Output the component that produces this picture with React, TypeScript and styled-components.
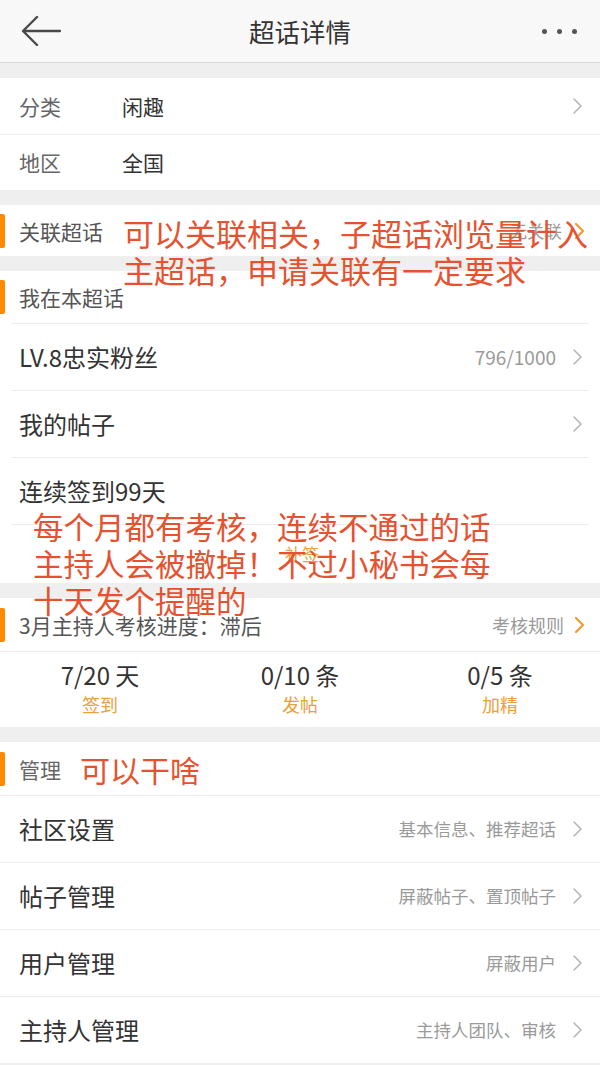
import React from "react";
import styled, { createGlobalStyle } from "styled-components";

const Global = createGlobalStyle`
  html, body { margin: 0; padding: 0; background: #efefef; }
  body { font-family: "Noto Sans CJK SC", "Noto Sans", sans-serif; }
  * { box-sizing: border-box; }
`;

const Page = styled.div`
  position: relative;
  width: 600px;
  min-height: 1065px;
  background: #efefef;
  overflow: hidden;
`;

const Header = styled.header`
  height: 63px;
  background: #f8f8f8;
  border-bottom: 1px solid #dadada;
  display: grid;
  grid-template-columns: 100px 1fr 100px;
  align-items: center;
`;

const BackBtn = styled.div`
  padding-left: 21px;
  display: flex;
  align-items: center;
`;

const Title = styled.h1`
  margin: 0;
  text-align: center;
  font-size: 25.5px;
  font-weight: 400;
  color: #333;
  line-height: 1;
`;

const More = styled.div`
  display: flex;
  justify-content: flex-end;
  gap: 10px;
  padding-right: 23px;
`;

const Dot = styled.span`
  width: 5px;
  height: 5px;
  border-radius: 50%;
  background: #555;
`;

const Section = styled.section`
  background: #fff;
  margin-top: 15px;
`;

const Row = styled.div<{ $h: number; $inset?: number; $divider?: boolean }>`
  position: relative;
  height: ${(p) => p.$h}px;
  display: flex;
  align-items: center;
  padding: 0 17px 0 19px;
  &::before {
    content: "";
    display: ${(p) => (p.$divider ? "block" : "none")};
    position: absolute;
    top: 0;
    left: ${(p) => p.$inset ?? 0}px;
    right: ${(p) => p.$inset ?? 0}px;
    height: 1px;
    background: #ececec;
  }
`;

const HeadRow = styled(Row)`
  padding-right: 15px;
  &::after {
    content: "";
    position: absolute;
    left: 0;
    top: 50%;
    width: 5px;
    height: 34px;
    transform: translateY(-50%);
    background: #ff8a00;
    border-radius: 0 2px 2px 0;
  }
`;

const Label = styled.span<{ $auto?: boolean }>`
  font-size: 21px;
  color: #666;
  width: ${(p) => (p.$auto ? "auto" : "103px")};
  flex: none;
`;

const Value = styled.span`
  font-size: 21px;
  color: #333;
  flex: 1;
`;

const HeadLabel = styled.span`
  font-size: 21px;
  color: #555;
  flex: 1;
  white-space: nowrap;
`;

const Big = styled.span`
  font-size: 24px;
  color: #333;
  flex: 1;
`;

const Hint = styled.span<{ $size?: number; $gap?: number }>`
  font-size: ${(p) => p.$size ?? 17.5}px;
  color: #9a9a9a;
  margin-right: ${(p) => p.$gap ?? 16}px;
  white-space: nowrap;
`;

const Spacer = styled.span`
  flex: 1;
`;

const Center = styled.span`
  flex: 1;
  text-align: center;
  font-size: 17px;
  color: #e9a13b;
  padding-left: 2px;
`;

const Stats = styled.div`
  position: relative;
  display: grid;
  grid-template-columns: repeat(3, 1fr);
  padding: 9px 0 11px;
  &::before {
    content: "";
    position: absolute;
    top: 0;
    left: 0;
    right: 0;
    height: 1px;
    background: #ececec;
  }
`;

const Stat = styled.div`
  display: flex;
  flex-direction: column;
  align-items: center;
  gap: 2px;
`;

const StatNum = styled.span`
  font-size: 24px;
  line-height: 30px;
  color: #333;
`;

const StatLabel = styled.span`
  font-size: 18px;
  line-height: 24px;
  color: #e9a13b;
`;

const Note = styled.span`
  font-size: 30px;
  color: #e6522f;
  margin-left: 19px;
  line-height: 1;
`;

const Overlay = styled.div<{ $top: number; $left: number; $size: number }>`
  position: absolute;
  top: ${(p) => p.$top}px;
  left: ${(p) => p.$left}px;
  font-size: ${(p) => p.$size}px;
  line-height: 37px;
  color: #e6522f;
  white-space: pre;
  pointer-events: none;
`;

const Chevron = ({ orange }: { orange?: boolean }) => (
  <svg width="11" height="18" viewBox="0 0 11 18" style={{ flex: "none" }}>
    <path
      d="M2 2 L9 9 L2 16"
      fill="none"
      stroke={orange ? "#f29b30" : "#b3b3b3"}
      strokeWidth={orange ? 2.2 : 1.5}
      strokeLinecap="round"
      strokeLinejoin="round"
    />
  </svg>
);

const BackArrow = () => (
  <svg width="40" height="32" viewBox="0 0 40 32">
    <path
      d="M39 16 H3 M16 2 L2 16 L16 30"
      fill="none"
      stroke="#4a4a4a"
      strokeWidth="2.4"
      strokeLinecap="round"
      strokeLinejoin="round"
    />
  </svg>
);

const manage = [
  { t: "社区设置", h: "基本信息、推荐超话" },
  { t: "帖子管理", h: "屏蔽帖子、置顶帖子" },
  { t: "用户管理", h: "屏蔽用户" },
  { t: "主持人管理", h: "主持人团队、审核" },
];

const stats = [
  { n: "7/20 天", l: "签到" },
  { n: "0/10 条", l: "发帖" },
  { n: "0/5 条", l: "加精" },
];

export default function App() {
  return (
    <Page>
      <Global />
      <Header>
        <BackBtn>
          <BackArrow />
        </BackBtn>
        <Title>超话详情</Title>
        <More>
          <Dot />
          <Dot />
          <Dot />
        </More>
      </Header>

      <Section>
        <Row $h={56}>
          <Label>分类</Label>
          <Value>闲趣</Value>
          <Chevron />
        </Row>
        <Row $h={56} $divider>
          <Label>地区</Label>
          <Value>全国</Value>
        </Row>
      </Section>

      <Section>
        <HeadRow $h={51}>
          <HeadLabel>关联超话</HeadLabel>
          <Hint $gap={12}>无关联</Hint>
          <Chevron orange />
        </HeadRow>
      </Section>

      <Section>
        <HeadRow $h={52}>
          <HeadLabel>我在本超话</HeadLabel>
        </HeadRow>
        <Row $h={67} $divider $inset={11}>
          <Big>LV.8忠实粉丝</Big>
          <Hint $size={19}>796/1000</Hint>
          <Chevron />
        </Row>
        <Row $h={67} $divider $inset={11}>
          <Big>我的帖子</Big>
          <Chevron />
        </Row>
        <Row $h={67} $divider $inset={11}>
          <Big>连续签到99天</Big>
        </Row>
        <Row $h={59} $divider $inset={11}>
          <Center>补签</Center>
        </Row>
      </Section>

      <Section>
        <HeadRow $h={53}>
          <HeadLabel>3月主持人考核进度：滞后</HeadLabel>
          <Hint $size={18} $gap={10}>考核规则</Hint>
          <Chevron orange />
        </HeadRow>
        <Stats>
          {stats.map((s) => (
            <Stat key={s.l}>
              <StatNum>{s.n}</StatNum>
              <StatLabel>{s.l}</StatLabel>
            </Stat>
          ))}
        </Stats>
      </Section>

      <Section>
        <HeadRow $h={53}>
          <Label $auto>管理</Label>
          <Note>可以干啥</Note>
          <Spacer />
        </HeadRow>
        {manage.map((m) => (
          <Row key={m.t} $h={67} $divider>
            <Big>{m.t}</Big>
            <Hint>{m.h}</Hint>
            <Chevron />
          </Row>
        ))}
      </Section>

      <Overlay $top={214} $left={123} $size={31}>
        {"可以关联相关，子超话浏览量计入\n主超话，申请关联有一定要求"}
      </Overlay>
      <Overlay $top={508} $left={33} $size={30.5}>
        {"每个月都有考核，连续不通过的话\n主持人会被撤掉！不过小秘书会每\n十天发个提醒的"}
      </Overlay>
    </Page>
  );
}
